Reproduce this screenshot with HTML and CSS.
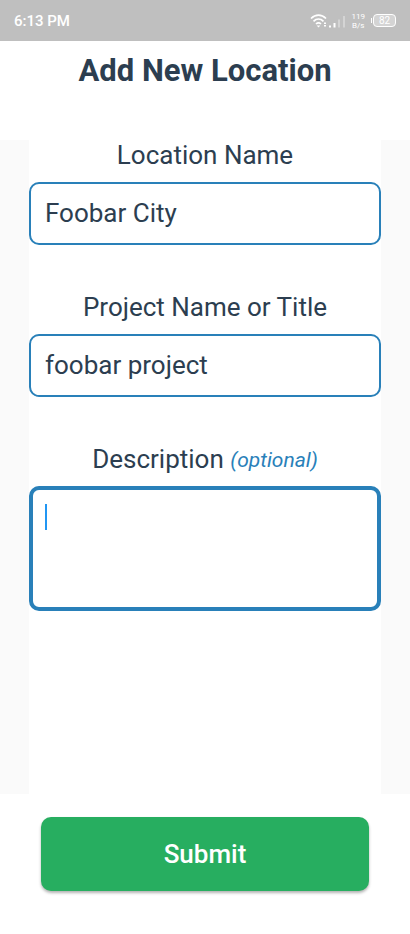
FILE: index.html
```html
<!DOCTYPE html>
<html lang="en">
<head>
  <meta charset="UTF-8">
  <meta name="viewport" content="width=device-width, initial-scale=1.0">
  <title>Add New Location</title>
  <link rel="stylesheet" href="styles.css">
</head>
<body>

<div class="status-bar">
  <span class="time">6:13 PM</span>
  <div class="status-icons">
    <svg width="36" height="16" viewBox="0 0 36 16" fill="none" stroke="#fff">
      <path d="M1 5.500c4.500-4.600 10.500-4.600 15 0M3.500 8.300c3-3 7-3 10 0M6 11c1.700-1.600 3.300-1.600 5 0" stroke-width="1.700"/>
      <path d="M8.500 14.500l-1.800-2h3.600z" fill="#fff" stroke="none"/>
      <path d="M14 9.500h2v1.500h-2zM14 12h2v1.500h-2zM19 12.500h2v2h-2zM23.500 10h2v4.500h-2z" fill="#fff" stroke="none"/>
      <path d="M28 6.500h2v8h-2zM33 3h2v11.500h-2z" fill="#d4d4d4" stroke="none"/>
    </svg>
    <span class="speed">119<br>B/s</span>
    <span class="battery">82</span>
  </div>
</div>

<header>
  <h1>Add New Location</h1>
</header>

<form id="locationForm">
  <div class="fields">
    <div class="fields-inner">
      <div class="field">
        <label for="location">Location Name</label>
        <input type="text" id="location" value="Foobar City">
      </div>
      <div class="field">
        <label for="project">Project Name or Title</label>
        <input type="text" id="project" value="foobar project">
      </div>
      <div class="field">
        <label for="description">Description <em>(optional)</em></label>
        <div class="active-box">
          <textarea id="description"></textarea>
          <span class="caret"></span>
        </div>
      </div>
    </div>
  </div>
  <div class="actions">
    <button type="submit">Submit</button>
  </div>
</form>

</body>
</html>
```

FILE: styles.css
```css
* { box-sizing: border-box; }
body { margin: 0; min-height: 100vh; display: flex; flex-direction: column; background: #fff; color: #2c3e50; font-family: Roboto, sans-serif; }

.status-bar { display: flex; justify-content: space-between; align-items: center; height: 41px; padding: 0 14px; background: #bfbfbf; color: #fff; }
.time { font-size: 15px; font-weight: 500; }
.status-icons { display: flex; align-items: center; }
.status-icons svg { display: block; }
.speed { margin-left: 6px; font-size: 8px; line-height: 9px; text-align: center; }
.battery { position: relative; width: 23px; height: 13px; margin-left: 8px; border: 1px solid #fff; border-radius: 4px; background: #d4d4d4; font-size: 10px; line-height: 11px; text-align: center; }
.battery::before { content: ""; position: absolute; left: -3px; top: 3px; width: 1px; height: 5px; background: #fff; }

header { height: 99px; padding-top: 12px; text-align: center; }
h1 { margin: 0; font-size: 31px; line-height: 36px; font-weight: 700; }

form { flex: 1; display: flex; flex-direction: column; }
.fields { flex: 1; display: flex; padding: 0 29px; background: #fafafa; }
.fields-inner { flex: 1; min-width: 0; background: #fff; }
.field { padding-bottom: 47px; }
label { display: block; margin-bottom: 12px; font-size: 26px; line-height: 30px; text-align: center; }
label em { color: #2980b9; font-size: 21px; line-height: 21px; vertical-align: 1px; }
input, textarea { display: block; width: 100%; margin: 0; border: 2px solid #2980b9; border-radius: 10px; background: #fff; color: #2c3e50; font-family: inherit; font-size: 26px; line-height: 30px; outline: none; }
input { height: 63px; padding: 0 14px 2px; }
textarea { height: 125px; padding: 10px 12px; border-width: 4px; resize: none; }
.active-box { position: relative; }
.caret { position: absolute; left: 16px; top: 18px; width: 2px; height: 26px; background: #2196f3; }

.actions { padding: 23px 41px 43px; }
button { display: block; width: 100%; height: 74px; border: none; border-radius: 10px; background: #27ae60; color: #fff; font-family: inherit; font-size: 26px; font-weight: 500; box-shadow: 0 2px 3px rgba(0,0,0,0.3); cursor: pointer; }
```
